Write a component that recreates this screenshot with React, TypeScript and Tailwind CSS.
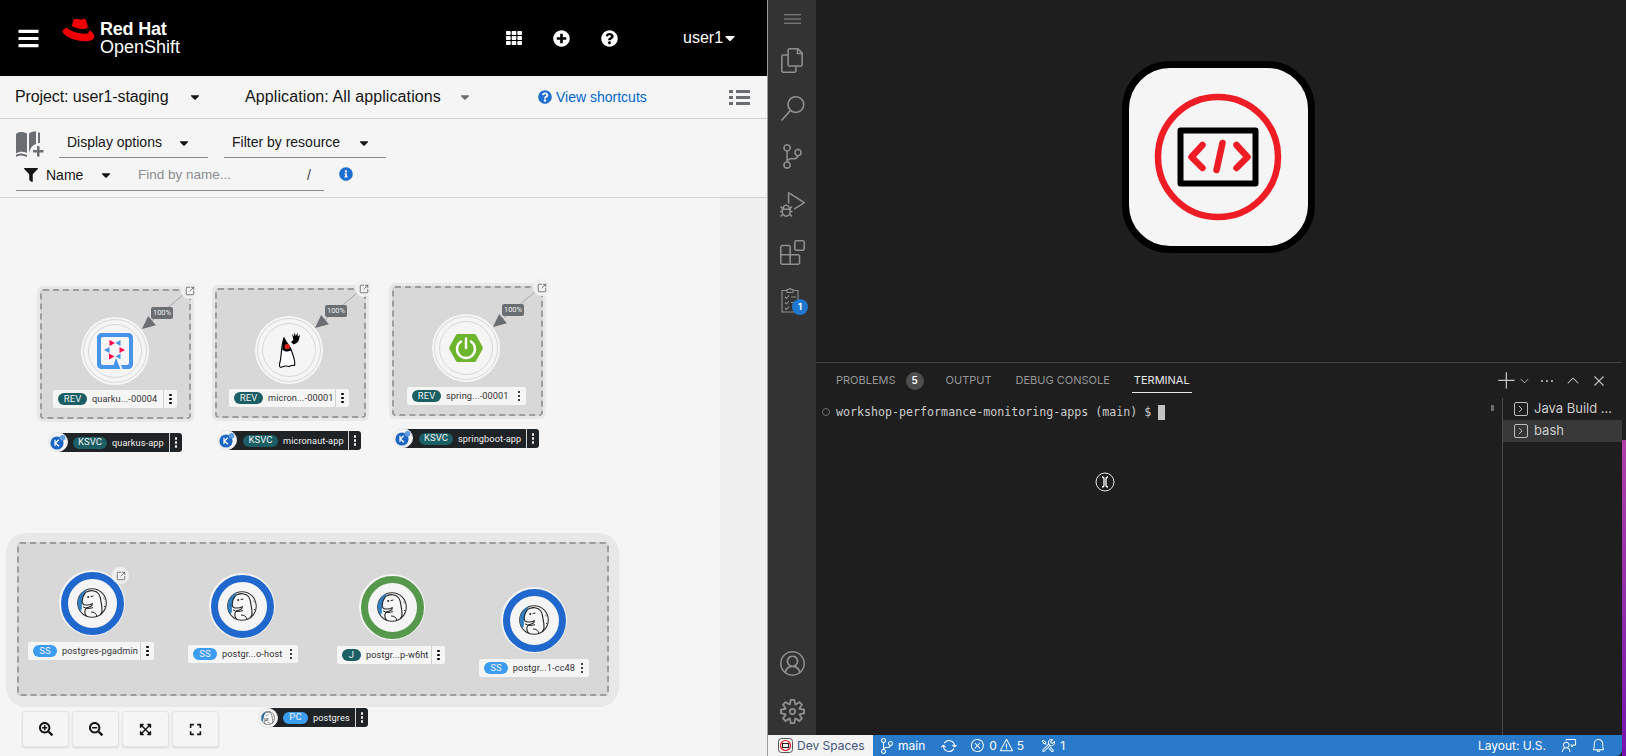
import React from 'react';
import {
  FaBars, FaTh, FaPlusCircle, FaQuestionCircle, FaCaretDown, FaFilter, FaInfoCircle,
  FaSearchPlus, FaSearchMinus, FaExpandArrowsAlt, FaExpand,
} from 'react-icons/fa';
import {
  VscFiles, VscSearch, VscSourceControl, VscDebugAlt, VscExtensions, VscAccount, VscSettingsGear,
  VscMenu, VscAdd, VscChevronDown, VscEllipsis, VscChevronUp, VscClose, VscSync,
  VscError, VscWarning, VscTools, VscFeedback, VscBell,
} from 'react-icons/vsc';
import { SquareArrowOutUpRight } from 'lucide-react';

function RedHatLogo() {
  return (
    <svg width="33" height="24" viewBox="0 0 33 26" preserveAspectRatio="none">
      <path d="M9 12 L11 3.5 C11.5 1 13.5 .4 15.5 1.2 C17.5 2 19 1.8 20.5 1.1 C22.8 .2 24 1.6 24.5 3.8 L26.5 12 Z" fill="#ee0000" />
      <path d="M5 10.5 C1.8 11.5 .2 13 .6 15 C1.8 19.5 12 25 22.5 25.3 C29 25.5 32.6 23 32.4 19.6 C32.2 17 29.8 14.6 26.5 12.6 C27.5 15.5 26 17 22 16.8 C15 16.4 7 13 5 10.5 Z" fill="#ee0000" />
      <path d="M5 10.5 C7 13 15 16.4 22 16.8 C26 17 27.5 15.5 26.5 12.6 L25.7 9.5 C25.5 11.5 23 12.2 19.5 11.8 C15 11.3 10.5 9.5 9.4 7.8 L8.6 10.4 C7.2 10.6 6 10.4 5 10.5 Z" fill="#000" />
    </svg>
  );
}

function BookIcon() {
  return (
    <svg width="28" height="26" viewBox="0 0 28 26" fill="#6a6e73">
      <path d="M0 3 C3 .6 7 .4 11 2.6 L11 22 C7 20 3 20.4 0 22.6 Z" />
      <path d="M13 2.6 C15.5 .8 18.5 .2 20 .4 L20 13 C17 14 15 16 14 19 L13 22 Z" />
      <path d="M22 1 L24 2 L24 12 L22 12 Z" />
      <path d="M0 24 C3 22 7 22 11 24 L11 26 C7 24 3 24 0 26 Z" />
      <path d="M21 15 h2.5 v4 h4 v2.5 h-4 v4 h-2.5 v-4 h-4 v-2.5 h4 Z" />
    </svg>
  );
}

function QuarkusIcon() {
  return (
    <svg width="36" height="36" viewBox="0 0 36 36">
      <path d="M15 36 H5 C2 36 0 34 0 31 V5 C0 2 2 0 5 0 H31 C34 0 36 2 36 5 V31 C36 34 34 36 31 36 H25.5 L24 32 H30 C31.2 32 32 31.2 32 30 V6 C32 4.8 31.2 4 30 4 H6 C4.8 4 4 4.8 4 6 V30 C4 31.2 4.8 32 6 32 H16.5 L19 25 L23.5 36 Z" fill="#4695eb" />
      <path d="M12.5 7 L18 10 L12.5 13 Z M22.5 14 L28 17 L22.5 20 Z M12 20.5 L17.5 23.5 L12 26.5 Z" fill="#ff004a" />
      <path d="M23.5 7 V13 L18.5 10 Z M7 17 L12.5 14 V20 Z M23.5 20.5 V26 L18.5 23.5 Z" fill="#4695eb" />
    </svg>
  );
}

function DukeIcon() {
  return (
    <svg width="21" height="37" viewBox="0 0 21 37">
      <path d="M5 6 C7 11 11 14 12.6 19 C14.4 25 17 29 15.4 33.5 C13.5 32.6 12 33.6 10 34.6 C8 33.6 6 33.6 3 35 C.4 36 0 33.6 1 30 C2.6 25 2 13 5 6 Z" fill="#fff" stroke="#000" strokeWidth="1.1" />
      <path d="M5 6 C7 11 11 14 12.6 18.6 C8.6 20 5.4 19.6 3.2 17.4 C3.4 13 4 9.4 5 6 Z" fill="#000" />
      <circle cx="8.2" cy="14.6" r="2.7" fill="#e2231a" />
      <path d="M12 10 L14.4 8 L13 1.8 L15 4.6 L15.6 .2 L16.8 4 L18.8 .6 L18.6 4.6 L21 3 L19.8 8 C19 10.6 16.6 11.8 14.6 12.4 Z" fill="#000" />
    </svg>
  );
}

function SpringIcon() {
  return (
    <svg width="34" height="30" viewBox="0 0 34 30">
      <path d="M9 1 H25 C26 1 26.6 1.4 27 2 L33.4 13.6 C33.8 14.4 33.8 15.6 33.4 16.4 L27 28 C26.6 28.6 26 29 25 29 H9 C8 29 7.4 28.6 7 28 L.6 16.4 C.2 15.6 .2 14.4 .6 13.6 L7 2 C7.4 1.4 8 1 9 1 Z" fill="#6cb52d" />
      <path d="M12 8.5 A9 9 0 1 0 22 8.5" fill="none" stroke="#fff" strokeWidth="2.4" strokeLinecap="round" />
      <path d="M17 5.5 V15" fill="none" stroke="#fff" strokeWidth="2.4" strokeLinecap="round" />
    </svg>
  );
}

function ElephantIcon({ size = 30 }: { size?: number }) {
  return (
    <svg width={size} height={size} viewBox="0 0 30 30">
      <circle cx="15" cy="15" r="14.3" fill="#f7f7f7" stroke="#333" strokeWidth="1.1" />
      <path d="M10 1.4 C4.6 3 .8 9 .8 15 C.8 18.6 2 21.4 3.6 23 C5.6 21.6 4.6 18 5 14.4 C5.4 10 7.6 5.6 10 1.4 Z" fill="#2f7fc1" />
      <path d="M8.6 4.4 C13 1.8 19 2 21.8 6 C24.2 9.6 23.6 14 24.8 18 C25.4 21 25.2 24 23.6 27" fill="none" stroke="#222" strokeWidth="1.1" />
      <path d="M8.6 4.4 C6.4 7 5.4 10 5.2 13 C4.9 15.2 6.4 17 8.6 17 C11 17.2 13.4 17 15.2 15.6 C15.6 17.4 14 18.8 11.6 19.2 C9.4 19.6 7.8 21.2 7.8 23.8 C7.8 25.6 8.4 27 9.6 28.2" fill="none" stroke="#222" strokeWidth="1.1" />
      <path d="M6 18.8 C9 20.8 13 20.8 16 19.6 M13.6 8.6 L16.4 8 M14 24 C17 24 19 25 20 28.4 M26.4 10 L27.6 11 M27 18 L28 19 M25.6 23 L26.8 24" fill="none" stroke="#222" strokeWidth="1" />
      <circle cx="11.2" cy="9" r="1" fill="#222" />
    </svg>
  );
}

function KnativeIcon() {
  return (
    <svg width="16" height="16" viewBox="0 0 16 16">
      <circle cx="7" cy="9" r="6.6" fill="#1e66c4" />
      <circle cx="12.6" cy="3.8" r="2.8" fill="#5f9fe0" />
      <path d="M5 5.8 V12 M8.8 5.8 L5.4 9 L9 12.2" fill="none" stroke="#fff" strokeWidth="1.2" />
    </svg>
  );
}

function Kebab({ className = '' }: { className?: string }) {
  return (
    <span className={`flex flex-col items-center gap-[1.5px] ${className}`}>
      <i className="block w-[2.5px] h-[2.5px] rounded-full bg-current" />
      <i className="block w-[2.5px] h-[2.5px] rounded-full bg-current" />
      <i className="block w-[2.5px] h-[2.5px] rounded-full bg-current" />
    </span>
  );
}

function Badge({ text, className }: { text: string; className: string }) {
  return (
    <span className={`flex items-center justify-center h-[12px] rounded-full text-[#f0f0f0] text-[9.5px] ${className}`}>
      {text}
    </span>
  );
}

function NodeLabel({ className, badge, badgeClass, text, divider = true }: {
  className: string; badge: string; badgeClass: string; text: string; divider?: boolean;
}) {
  return (
    <div className={`absolute flex items-center h-[18px] rounded-[2px] bg-[#f5f5f5] pl-[5px] text-[#333] font-['Roboto',sans-serif] text-[9.2px] tracking-[0.1px] ${className}`}>
      <Badge text={badge} className={badgeClass} />
      <span className="ml-[5px] whitespace-nowrap">{text}</span>
      <span className={`ml-auto flex h-full w-[14px] items-center justify-center ${divider ? 'border-l border-[#d2d2d2]' : ''}`}>
        <Kebab className="text-black" />
      </span>
    </div>
  );
}

function AppLabel({ className, icon, badge, badgeClass, text, iconClass }: {
  className: string; icon: React.ReactNode; badge: string; badgeClass: string; text: string; iconClass: string;
}) {
  return (
    <>
      <div className={`absolute flex items-center h-[19px] rounded-[3px] bg-[#1f2326] text-[#f0f0f0] font-['Roboto',sans-serif] text-[9.2px] tracking-[0.1px] ${className}`}>
        <Badge text={badge} className={badgeClass} />
        <span className="ml-[5px] whitespace-nowrap">{text}</span>
        <span className="ml-auto flex h-full w-[13px] items-center justify-center border-l border-[#d2d2d2]">
          <Kebab />
        </span>
      </div>
      <div className={`absolute flex h-[20px] w-[20px] items-center justify-center rounded-full bg-[#f5f5f5] border border-[#e4e4e4] ${iconClass}`}>
        {icon}
      </div>
    </>
  );
}

function LinkDot({ className }: { className: string }) {
  return (
    <div className={`absolute flex h-[17px] w-[17px] items-center justify-center rounded-full bg-[#f0f0f0] text-[#555] ${className}`}>
      <SquareArrowOutUpRight size={10} strokeWidth={1.8} />
    </div>
  );
}

function RevCircle({ className, children }: { className: string; children: React.ReactNode }) {
  return (
    <div className={`absolute flex h-[68px] w-[68px] items-center justify-center rounded-full bg-[#f5f5f5] ${className}`}>
      <div className="flex h-[64px] w-[64px] items-center justify-center rounded-full border border-[#d8d8d8]">
        <div className="flex h-[54px] w-[54px] items-center justify-center rounded-full border border-[#d8d8d8]">
          {children}
        </div>
      </div>
    </div>
  );
}

function PodCircle({ className, ring }: { className: string; ring: string }) {
  return (
    <div className={`absolute flex h-[66px] w-[66px] items-center justify-center rounded-full bg-[#f5f5f5] ${className}`}>
      <div className={`flex h-[63px] w-[63px] items-center justify-center rounded-full border-[7px] ${ring}`}>
        <ElephantIcon />
      </div>
    </div>
  );
}

function RevBox({ className }: { className: string }) {
  return (
    <div className={`absolute h-[130px] w-[151px] rounded-[3px] border-2 border-dashed border-[#9a9c9e] bg-[#d8d8d8] outline-[3px] outline-[#e8e8e8] ${className}`} />
  );
}

function Percent({ className }: { className: string }) {
  return (
    <div className={`absolute flex h-[12px] w-[22px] items-center justify-center rounded-[2px] bg-[#6a6e73] text-[7.5px] text-[#f0f0f0] font-['Roboto',sans-serif] ${className}`}>
      100%
    </div>
  );
}

const edges = [
  { x1: 189, y1: 290, x2: 142, y2: 329 },
  { x1: 363, y1: 288, x2: 315, y2: 328 },
  { x1: 541, y1: 287, x2: 493, y2: 327 },
];

function Edges() {
  return (
    <svg className="absolute left-0 top-0" width="767" height="756">
      {edges.map((e) => {
        const len = Math.hypot(e.x2 - e.x1, e.y2 - e.y1);
        const dx = (e.x2 - e.x1) / len;
        const dy = (e.y2 - e.y1) / len;
        const bx = e.x2 - dx * 13;
        const by = e.y2 - dy * 13;
        const pts = `${e.x2},${e.y2} ${bx - dy * 6},${by + dx * 6} ${bx + dy * 6},${by - dx * 6}`;
        return (
          <g key={e.x1}>
            <line x1={e.x1} y1={e.y1} x2={bx} y2={by} stroke="#a8a8a8" strokeWidth="1" />
            <polygon points={pts} fill="#6a6e73" />
          </g>
        );
      })}
    </svg>
  );
}

function ZoomButton({ children }: { children: React.ReactNode }) {
  return (
    <button className="flex h-[36px] w-[47px] items-center justify-center rounded-[3px] border border-[#e4e4e4] bg-[#f5f5f5] text-[#151515] shadow-[0_1px_2px_rgba(0,0,0,0.12)]">
      {children}
    </button>
  );
}

function Topology() {
  return (
    <>
      {/* free canvas, offsets are page coordinates of the left pane */}
      <RevBox className="left-[40px] top-[289px]" />
      <RevBox className="left-[215px] top-[288px]" />
      <RevBox className="left-[392px] top-[286px]" />
      <Edges />
      <LinkDot className="left-[181px] top-[282px]" />
      <LinkDot className="left-[355px] top-[280px]" />
      <LinkDot className="left-[533px] top-[279px]" />
      <Percent className="left-[151px] top-[307px]" />
      <Percent className="left-[325px] top-[305px]" />
      <Percent className="left-[502px] top-[304px]" />
      <RevCircle className="left-[81px] top-[317px]"><QuarkusIcon /></RevCircle>
      <RevCircle className="left-[255px] top-[316px]"><DukeIcon /></RevCircle>
      <RevCircle className="left-[432px] top-[314px]"><SpringIcon /></RevCircle>
      <NodeLabel className="left-[53px] top-[390px] w-[124px]" badge="REV" badgeClass="w-[29px] bg-[#1b5e64]" text="quarku...-00004" />
      <NodeLabel className="left-[229px] top-[389px] w-[120px]" badge="REV" badgeClass="w-[29px] bg-[#1b5e64]" text="micron...-00001" />
      <NodeLabel className="left-[407px] top-[387px] w-[119px]" badge="REV" badgeClass="w-[29px] bg-[#1b5e64]" text="spring...-00001" divider={false} />
      <AppLabel className="left-[58px] top-[433px] w-[124px] pl-[15px]" iconClass="left-[48px] top-[432px]" icon={<KnativeIcon />} badge="KSVC" badgeClass="w-[34px] bg-[#1b5e64]" text="quarkus-app" />
      <AppLabel className="left-[227px] top-[431px] w-[134px] pl-[16px]" iconClass="left-[217px] top-[430px]" icon={<KnativeIcon />} badge="KSVC" badgeClass="w-[35px] bg-[#1b5e64]" text="micronaut-app" />
      <AppLabel className="left-[403px] top-[429px] w-[136px] pl-[16px]" iconClass="left-[393px] top-[428px]" icon={<KnativeIcon />} badge="KSVC" badgeClass="w-[34px] bg-[#1b5e64]" text="springboot-app" />

      <div className="absolute left-[6px] top-[533px] h-[174px] w-[613px] rounded-[20px] bg-[#e8e8e8] p-[9px_10px_11px_11px]">
        <div className="h-full w-full rounded-[3px] border-2 border-dashed border-[#9a9c9e] bg-[#d8d8d8]" />
      </div>
      <PodCircle className="left-[59px] top-[570px]" ring="border-[#2168ce]" />
      <PodCircle className="left-[209px] top-[573px]" ring="border-[#2168ce]" />
      <PodCircle className="left-[359px] top-[574px]" ring="border-[#57994c]" />
      <PodCircle className="left-[501px] top-[587px]" ring="border-[#2168ce]" />
      <LinkDot className="left-[112px] top-[567px]" />
      <NodeLabel className="left-[28px] top-[642px] w-[126px]" badge="SS" badgeClass="w-[24px] bg-[#3b9cf0]" text="postgres-pgadmin" />
      <NodeLabel className="left-[188px] top-[645px] w-[110px]" badge="SS" badgeClass="w-[24px] bg-[#3b9cf0]" text="postgr...o-host" divider={false} />
      <NodeLabel className="left-[337px] top-[646px] w-[108px]" badge="J" badgeClass="w-[19px] bg-[#1b5e64]" text="postgr...p-w6ht" />
      <NodeLabel className="left-[479px] top-[659px] w-[110px]" badge="SS" badgeClass="w-[24px] bg-[#3b9cf0]" text="postgr...1-cc48" divider={false} />
      <AppLabel className="left-[268px] top-[708px] w-[100px] pl-[15px]" iconClass="left-[258px] top-[708px]" icon={<ElephantIcon size={14} />} badge="PC" badgeClass="w-[25px] bg-[#3b9cf0]" text="postgres" />

      <div className="absolute left-[22px] top-[711px] flex gap-[3px]">
        <ZoomButton><FaSearchPlus size={14} /></ZoomButton>
        <ZoomButton><FaSearchMinus size={14} /></ZoomButton>
        <ZoomButton><FaExpandArrowsAlt size={13} /></ZoomButton>
        <ZoomButton><FaExpand size={13} /></ZoomButton>
      </div>
    </>
  );
}

function OpenShiftPane() {
  return (
    <div className="relative flex h-full w-[767px] shrink-0 flex-col overflow-hidden bg-[#f5f5f5] font-['Liberation_Sans',sans-serif] text-[#151515]">
      <header className="flex h-[76px] shrink-0 items-center bg-black text-white">
        <FaBars className="ml-[17px]" size={23} />
        <div className="ml-[22px] mt-[-16px]"><RedHatLogo /></div>
        <div className="ml-[5px] flex flex-col leading-[18px]">
          <span className="text-[18px] font-bold tracking-[-0.2px]">Red Hat</span>
          <span className="text-[18px]">OpenShift</span>
        </div>
        <FaTh className="ml-[326px]" size={16} />
        <FaPlusCircle className="ml-[31px]" size={17} />
        <FaQuestionCircle className="ml-[31px]" size={17} />
        <span className="ml-[65px] text-[16px]">user1</span>
        <FaCaretDown className="ml-[-1px]" size={16} />
      </header>

      <div className="flex h-[43px] shrink-0 items-center border-b border-[#d2d2d2] pl-[15px] text-[16px]">
        <span className="w-[173px] tracking-[-0.1px]">Project: user1-staging</span>
        <FaCaretDown size={14} />
        <span className="ml-[43px] w-[213px] tracking-[0.1px]">Application: All applications</span>
        <FaCaretDown className="text-[#6a6e73]" size={14} />
        <FaQuestionCircle className="ml-[66px] text-[#1f6fd1]" size={14} />
        <span className="ml-[4px] text-[14px] text-[#0066cc]">View shortcuts</span>
        <span className="ml-[82px] flex flex-col gap-[3px] text-[#6a6e73]">
          <i className="flex gap-[3px]"><b className="h-[3px] w-[4px] bg-current" /><b className="h-[3px] w-[14px] bg-current" /></i>
          <i className="flex gap-[3px]"><b className="h-[3px] w-[4px] bg-current" /><b className="h-[3px] w-[14px] bg-current" /></i>
          <i className="flex gap-[3px]"><b className="h-[3px] w-[4px] bg-current" /><b className="h-[3px] w-[14px] bg-current" /></i>
        </span>
      </div>

      <div className="flex h-[79px] shrink-0 flex-col border-b border-[#d2d2d2] pl-[16px] text-[14px]">
        <div className="mt-[11px] flex items-center">
          <BookIcon />
          <div className="ml-[15px] flex h-[28px] w-[149px] items-center border-b border-[#8a8d90] pb-[2px] pl-[8px]">
            <span className="w-[110px]">Display options</span>
            <FaCaretDown size={14} />
          </div>
          <div className="ml-[16px] flex h-[28px] w-[162px] items-center border-b border-[#8a8d90] pb-[2px] pl-[8px]">
            <span className="w-[125px]">Filter by resource</span>
            <FaCaretDown size={14} />
          </div>
        </div>
        <div className="flex h-[33px] items-center">
          <div className="flex h-full w-[113px] items-center border-b border-[#8a8d90] pl-[8px] pt-[2px]">
            <FaFilter size={14} />
            <span className="ml-[8px] w-[53px]">Name</span>
            <FaCaretDown size={14} />
          </div>
          <div className="flex h-full w-[195px] items-center border-b border-[#8a8d90] pl-[9px] pt-[2px]">
            <span className="w-[169px] text-[13.5px] text-[#8a8d90]">Find by name...</span>
            <span className="text-[#444]">/</span>
          </div>
          <FaInfoCircle className="ml-[15px] mt-[-2px] text-[#1f6fd1]" size={14} />
        </div>
      </div>

      <div className="flex flex-1 justify-end">
        <div className="h-full w-[47px] bg-[#f0f0f0]" />
      </div>

      <Topology />
    </div>
  );
}

function ActivityItem({ children, className = 'h-[48px]' }: { children: React.ReactNode; className?: string }) {
  return <div className={`flex w-full items-center justify-center text-[#8f8f8f] ${className}`}>{children}</div>;
}

function WorkspaceLogo() {
  return (
    <div className="flex h-[192px] w-[193px] items-center justify-center rounded-[48px] border-[7px] border-black bg-[#f5f5f5]">
      <svg width="130" height="130" viewBox="0 0 130 130">
        <circle cx="65" cy="65" r="60" fill="none" stroke="#ee1c25" strokeWidth="6.5" />
        <rect x="27.5" y="38.5" width="75" height="53" fill="none" stroke="#000" strokeWidth="6" strokeLinejoin="round" />
        <path d="M49.5 53 L38.5 65 L49.5 76 M83.5 53 L94.5 65 L83.5 76 M69.5 51 L63.5 78" fill="none" stroke="#ee1c25" strokeWidth="6.5" strokeLinecap="round" strokeLinejoin="round" />
      </svg>
    </div>
  );
}

function TasksIcon() {
  return (
    <svg width="24" height="26" viewBox="0 0 24 26" fill="none" stroke="#8f8f8f" strokeWidth="1.1">
      <path d="M7 3.5 H2 V25 H18 V3.5 H13 M7 5.5 V2.5 H9 C9 1 11 1 11 2.5 H13 V5.5 Z" />
      <path d="M5 10 L6.5 11.5 L9 8.5 M5 15.5 L6.5 17 L9 14 M5 21 L6.5 22.5 L9 19.5 M11 10 H16 M11 15.5 H16" />
    </svg>
  );
}

function PanelTab({ children, active = false }: { children: React.ReactNode; active?: boolean }) {
  return (
    <span className={`flex h-[24px] items-center border-b px-[2px] ${active ? 'border-[#e7e7e7] text-[#e7e7e7]' : 'border-transparent text-[#969696]'}`}>
      {children}
    </span>
  );
}

function TerminalRow({ label, active = false }: { label: string; active?: boolean }) {
  return (
    <div className={`flex h-[22px] items-center pl-[11px] text-[13px] text-[#cccccc] ${active ? 'bg-[#383838]' : ''}`}>
      <svg width="14" height="14" viewBox="0 0 14 14" fill="none" stroke="#bdbdbd" strokeWidth="1">
        <rect x=".5" y=".5" width="13" height="13" rx="1.5" />
        <path d="M5 4 L8 7 L5 10" />
      </svg>
      <span className="ml-[6px] whitespace-nowrap">{label}</span>
    </div>
  );
}

function DevSpacesIcon() {
  return (
    <svg width="15" height="15" viewBox="0 0 15 15" fill="none">
      <rect x=".5" y=".5" width="14" height="14" rx="3" stroke="#555" fill="#f5f5f5" />
      <circle cx="7.5" cy="7.5" r="5" stroke="#ee1c25" strokeWidth="1.2" />
      <rect x="4.5" y="5.5" width="6" height="4" stroke="#222" />
    </svg>
  );
}

function StatusBar() {
  return (
    <footer className="flex h-[21px] shrink-0 items-center rounded-br-[6px] bg-[#2a7acb] text-[12px] text-white">
      <div className="flex h-full w-[105px] items-center bg-[#f3f3f3] pl-[10px] text-[#44557c]">
        <DevSpacesIcon />
        <span className="ml-[4px]">Dev Spaces</span>
      </div>
      <VscSourceControl className="ml-[6px]" size={16} />
      <span className="ml-[3px]">main</span>
      <VscSync className="ml-[16px]" size={16} />
      <VscError className="ml-[13px]" size={15} />
      <span className="ml-[4px]">0</span>
      <VscWarning className="ml-[2px]" size={15} />
      <span className="ml-[3px]">5</span>
      <VscTools className="ml-[17px]" size={15} />
      <span className="ml-[4px]">1</span>
      <span className="ml-auto">Layout: U.S.</span>
      <VscFeedback className="ml-[16px]" size={15} />
      <VscBell className="ml-[14px] mr-[16px]" size={15} />
    </footer>
  );
}

function VsCodePane() {
  return (
    <div className="flex h-full min-w-0 flex-1 flex-col border-l border-[#9a9a9a] bg-[#1e1e1e] font-['Inter',sans-serif]">
      <div className="flex min-h-0 flex-1">
        <aside className="flex w-[48px] shrink-0 flex-col items-center bg-[#333333]">
          <ActivityItem className="h-[36px]"><VscMenu size={17} /></ActivityItem>
          <ActivityItem><VscFiles size={25} /></ActivityItem>
          <ActivityItem><VscSearch size={25} /></ActivityItem>
          <ActivityItem><VscSourceControl size={25} /></ActivityItem>
          <ActivityItem><VscDebugAlt size={25} /></ActivityItem>
          <ActivityItem><VscExtensions size={25} /></ActivityItem>
          <ActivityItem>
            <div className="relative">
              <TasksIcon />
              <span className="absolute left-[12px] top-[12px] flex h-[16px] w-[16px] items-center justify-center rounded-full bg-[#1f77d0] text-[9px] font-bold text-white">1</span>
            </div>
          </ActivityItem>
          <div className="flex-1" />
          <ActivityItem><VscAccount size={25} /></ActivityItem>
          <ActivityItem><VscSettingsGear size={25} /></ActivityItem>
        </aside>

        <div className="flex min-w-0 flex-1 flex-col">
          <div className="flex h-[362px] shrink-0 justify-center pt-[61px]">
            <div className="ml-[-2px]"><WorkspaceLogo /></div>
          </div>
          <div className="flex min-h-0 flex-1 flex-col border-t border-[#414141]">
            <div className="flex h-[35px] shrink-0 items-center pl-[18px] text-[11px]">
              <PanelTab>PROBLEMS</PanelTab>
              <span className="ml-[8px] flex h-[18px] w-[18px] items-center justify-center rounded-full bg-[#4d4d4d] text-[10px] font-semibold text-white">5</span>
              <span className="ml-[20px]"><PanelTab>OUTPUT</PanelTab></span>
              <span className="ml-[20px]"><PanelTab>DEBUG CONSOLE</PanelTab></span>
              <span className="ml-[20px]"><PanelTab active>TERMINAL</PanelTab></span>
              <div className="ml-auto flex items-center text-[#c5c5c5]">
                <VscAdd size={20} />
                <VscChevronDown size={13} className="ml-[1px] text-[#aaa]" />
                <VscEllipsis size={16} className="ml-[8px]" />
                <VscChevronUp size={18} className="ml-[9px]" />
                <VscClose size={18} className="ml-[8px] mr-[14px]" />
              </div>
            </div>
            <div className="flex min-h-0 flex-1">
              <div className="relative min-w-0 flex-1 pl-[20px] pt-[6px]">
                <div className="flex items-center font-['DejaVu_Sans_Mono',monospace] text-[11.65px] leading-[16px] text-[#cccccc]">
                  <span className="whitespace-pre">workshop-performance-monitoring-apps (main) $</span>
                  <span className="ml-[7px] h-[15px] w-[7px] bg-[#c4c4c4]" />
                </div>
                <span className="absolute left-[6px] top-[10px] h-[8px] w-[8px] rounded-full border border-[#6e6e6e]" />
                <span className="absolute right-[8px] top-[7px] h-[6px] w-[3px] bg-[#6a6a6a]" />
                {/* remote cursor */}
                <svg className="absolute left-[279px] top-[74px]" width="20" height="20" viewBox="0 0 20 20" fill="none" stroke="#fff" strokeWidth="1">
                  <circle cx="10" cy="10" r="9" stroke="#e8e8e8" />
                  <path d="M7 5 C8.5 5 9 5.5 9 7 V13 C9 14.5 8.5 15 7 15 M13 5 C11.5 5 11 5.5 11 7 V13 C11 14.5 11.5 15 13 15" strokeWidth="1.3" />
                </svg>
              </div>
              <div className="w-[120px] shrink-0 border-l border-[#4a4a4a]">
                <TerminalRow label="Java Build ..." />
                <TerminalRow label="bash" active />
              </div>
            </div>
          </div>
        </div>
      </div>
      <StatusBar />
    </div>
  );
}

export default function App() {
  return (
    <div className="flex h-[756px] w-[1626px] overflow-hidden bg-[#1e1e1e]">
      <OpenShiftPane />
      <VsCodePane />
      <div className="flex h-full w-[4px] shrink-0 flex-col">
        <div className="h-[440px] bg-[#1e1e1e]" />
        <div className="flex-1 bg-gradient-to-b from-[#b23fa6] to-[#7412b0]" />
      </div>
    </div>
  );
}
